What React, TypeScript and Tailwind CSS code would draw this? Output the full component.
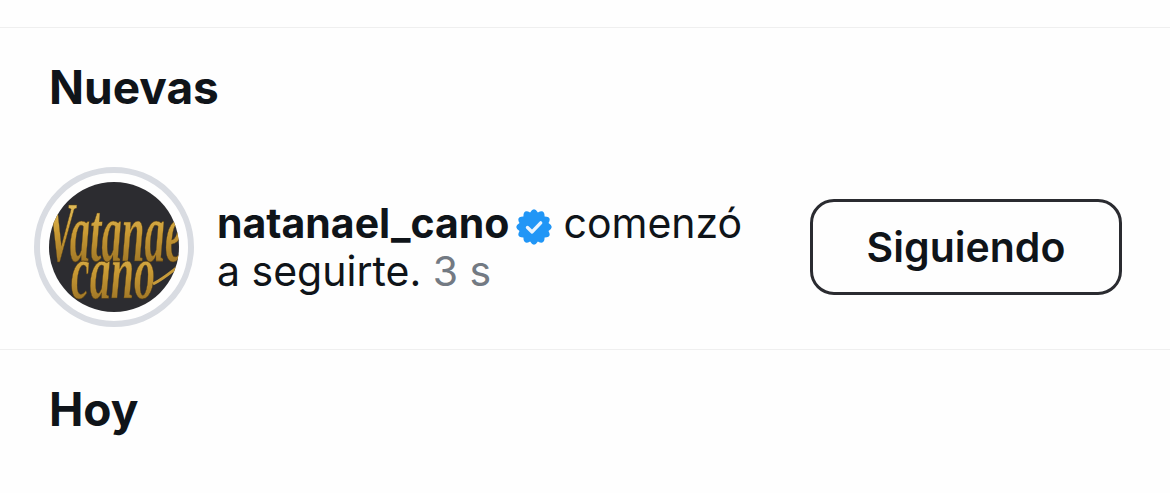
const ink = "text-[#0f1419]";

// scalloped badge outline, 12 bumps around the centre
function badgePath() {
  const bumps = 12;
  const pts: string[] = [];
  for (let i = 0; i < bumps; i++) {
    const a0 = ((i - 0.5) / bumps) * Math.PI * 2;
    const a1 = (i / bumps) * Math.PI * 2;
    const a2 = ((i + 0.5) / bumps) * Math.PI * 2;
    const p = (a: number, r: number) => `${(18 + Math.cos(a) * r).toFixed(2)} ${(18 + Math.sin(a) * r).toFixed(2)}`;
    if (i === 0) pts.push(`M${p(a0, 15)}`);
    pts.push(`Q${p(a1, 21)} ${p(a2, 15)}`);
  }
  return pts.join(" ") + "Z";
}

function VerifiedBadge() {
  return (
    <svg viewBox="0 0 36 36" className="ml-[7px] mr-[11px] inline-block size-[36px] align-[-7px]">
      <path d={badgePath()} fill="#2196f6" />
      <path d="M11.5 18.5l4.6 4.4 8.6-9" fill="none" stroke="#eaf4fe" strokeWidth="3.4" strokeLinecap="round" strokeLinejoin="round" />
    </svg>
  );
}

function Avatar() {
  return (
    <div className="flex size-[160px] shrink-0 items-center justify-center rounded-full border-[6px] border-[#d9dce2]">
      <svg viewBox="0 0 130 130" className="size-[130px] rounded-full">
        <defs>
          <linearGradient id="gold" x1="0" y1="0" x2="0" y2="1">
            <stop offset="0" stopColor="#f0d272" />
            <stop offset="0.5" stopColor="#c99a34" />
            <stop offset="1" stopColor="#8a6420" />
          </linearGradient>
        </defs>
        <rect width="130" height="130" fill="#2c2c30" />
        <text x="-2" y="79" fontFamily="'Liberation Serif', serif" fontStyle="italic" fontWeight="700" fontSize="84" textLength="136" lengthAdjust="spacingAndGlyphs" fill="url(#gold)" stroke="#5a4012" strokeWidth="0.6">
          Vatanae
        </text>
        <text x="22" y="116" fontFamily="'Liberation Serif', serif" fontStyle="italic" fontWeight="700" fontSize="78" textLength="84" lengthAdjust="spacingAndGlyphs" fill="url(#gold)" stroke="#5a4012" strokeWidth="0.6">
          cano
        </text>
        <path d="M104 102 C114 97 122 90 130 84" fill="none" stroke="#c79b3a" strokeWidth="3" />
      </svg>
    </div>
  );
}

export default function App() {
  return (
    <div className={`flex h-[493px] w-[1170px] flex-col overflow-hidden bg-[#fefefe] pt-[27px] font-['Inter',sans-serif] ${ink}`}>
      <section className="border-t border-[#efefef]">
        <h2 className="pl-[49px] pt-[33px] text-[46px] leading-[52px] font-bold">Nuevas</h2>
        <div className="mt-[54px] flex items-center pl-[34px] pr-[48px]">
          <Avatar />
          <p className="ml-[23px] w-[540px] text-[41px] leading-[48px]">
            <span className="font-bold">natanael_cano</span>
            <VerifiedBadge />
            comenzó a seguirte. <span className="text-[#737a83]">3 s</span>
          </p>
          <button className="ml-auto h-[96px] w-[312px] rounded-[24px] border-[3px] border-[#2a2b30] pt-[2px] text-[41px] font-semibold">
            Siguiendo
          </button>
        </div>
      </section>
      <section className="mt-[22px] border-t border-[#efefef]">
        <h2 className="pl-[49px] pt-[33px] text-[46px] leading-[52px] font-bold">Hoy</h2>
      </section>
    </div>
  );
}
